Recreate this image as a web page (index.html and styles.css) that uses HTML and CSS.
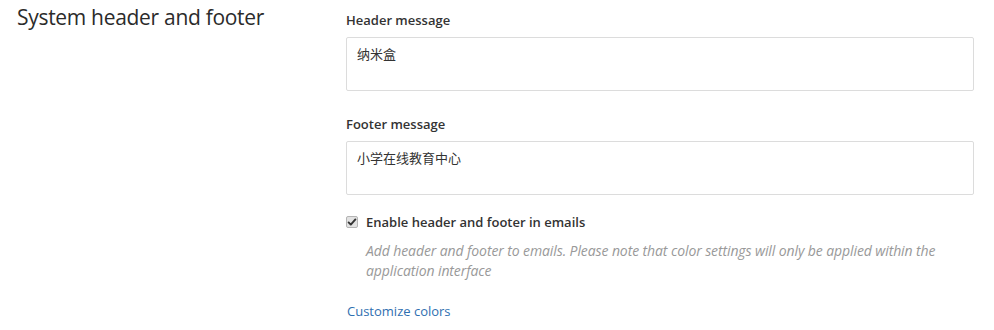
FILE: index.html
```html
<!DOCTYPE html>
<html lang="en">
<head>
<meta charset="utf-8">
<title>System header and footer</title>
<link rel="stylesheet" href="styles.css">
</head>
<body>
<div class="section">
  <div class="section-title"><h2>System header and footer</h2></div>
  <div class="section-body">
    <div class="field">
      <label class="field-label" for="hdr">Header message</label>
      <textarea id="hdr" class="field-input">纳米盒</textarea>
    </div>
    <div class="field">
      <label class="field-label" for="ftr">Footer message</label>
      <textarea id="ftr" class="field-input">小学在线教育中心</textarea>
    </div>
    <div class="check">
      <label class="check-row">
        <span class="check-wrap">
          <input type="checkbox" checked class="check-box">
          <svg class="check-mark" width="12" height="12" viewBox="0 0 12 12" aria-hidden="true"><path d="M2.6 6.4 L4.8 8.6 L9.4 3.4" fill="none" stroke="#333" stroke-width="1.9" stroke-linecap="round" stroke-linejoin="round"/></svg>
        </span>
        <span class="check-label">Enable header and footer in emails</span>
      </label>
      <p class="check-help">Add header and footer to emails. Please note that color settings will only be applied within the application interface</p>
    </div>
    <a class="link" href="#">Customize colors</a>
  </div>
</div>
</body>
</html>
```
FILE: styles.css
```css
html, body {
  margin: 0;
  padding: 0;
  background: #fff;
}
body {
  font-family: "Open Sans", "Noto Sans CJK SC", sans-serif;
  color: #333;
  font-size: 13px;
}
.section {
  display: flex;
  padding: 0 20px 0 17px;
}
.section-title {
  width: 330px;
  flex: none;
}
.section-title h2 {
  margin: 2px 0 0;
  font-size: 21px;
  font-weight: 400;
  line-height: 30px;
  letter-spacing: -0.3px;
  color: #2b2b2b;
}
.section-body {
  flex: 1;
  padding-top: 10px;
}
.field {
  display: flex;
  flex-direction: column;
  margin-bottom: 23px;
}
.field-label {
  font-weight: 600;
  font-size: 13px;
  line-height: 20px;
  margin-bottom: 7px;
  margin-left: -1px;
}
.field-input {
  box-sizing: border-box;
  height: 54px;
  margin-left: -1px;
  border: 1px solid #dcdcdc;
  border-radius: 2px;
  padding: 6px 10px;
  font-family: "Noto Sans CJK SC", sans-serif;
  font-size: 13px;
  line-height: 20px;
  color: #333;
  resize: none;
}
.check {
  margin-top: -6px;
}
.check-row {
  display: flex;
  align-items: center;
  gap: 8px;
  line-height: 20px;
}
.check-wrap {
  position: relative;
  display: block;
  width: 12px;
  height: 12px;
  margin-left: -1px;
}
.check-box {
  appearance: none;
  -webkit-appearance: none;
  display: block;
  box-sizing: border-box;
  margin: 0;
  width: 12px;
  height: 12px;
  border: 1px solid #b4b4b4;
  border-radius: 2px;
  background: #e2e2e2;
}
.check-mark {
  position: absolute;
  left: 0;
  top: 0;
  pointer-events: none;
}
.check-label {
  font-weight: 600;
}
.check-help {
  margin: 9px 0 0 19px;
  font-style: italic;
  font-size: 14px;
  letter-spacing: -0.1px;
  color: #999;
  line-height: 20px;
}
.link {
  display: block;
  margin-top: 20px;
  color: #2f6fb0;
  text-decoration: none;
  line-height: 20px;
}
```
